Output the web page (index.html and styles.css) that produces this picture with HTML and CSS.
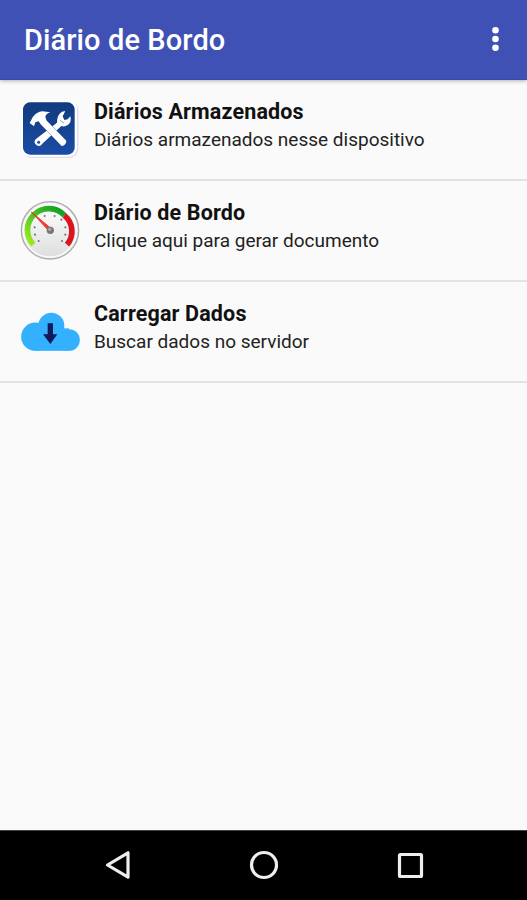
FILE: index.html
```html
<!DOCTYPE html>
<html lang="pt-BR">
    <head>
        <meta charset="utf-8">
        <title>Diário de Bordo</title>
        <link rel="stylesheet" href="styles.css">
    </head>
    <body>
        <header class="toolbar">
            <h1>Diário de Bordo</h1>
            <button class="overflow" aria-label="Mais opções">
                <svg width="9" height="26" viewBox="0 0 9 26" fill="#fff">
                    <circle cx="4.5" cy="4.2" r="3.3"/>
                    <circle cx="4.5" cy="13" r="3.3"/>
                    <circle cx="4.5" cy="21.8" r="3.3"/>
                </svg>
            </button>
        </header>
        <main class="list">
            <div class="item">
                <svg class="icon" viewBox="30 30 180 180">
                    <defs>
                        <linearGradient id="blue" x1="0" y1="0" x2="0" y2="1">
                            <stop offset="0" stop-color="#113a80"/>
                            <stop offset="1" stop-color="#1b4da5"/>
                        </linearGradient>
                    </defs>
                    <rect x="36" y="34" width="169" height="170" rx="27" fill="#dfdfec"/>
                    <rect x="34" y="32" width="167" height="168" rx="25" fill="#fff"/>
                    <rect x="39" y="37" width="155" height="157" rx="21" fill="url(#blue)"/>
                    <!-- wrench -->
                    <path d="M77 148L141 98Q141 73 156 65L166 63L158 79L163 90L173 88L181 79Q186 97 172 106Q164 111 154 108L97 161Q89 173 79 165Q69 157 77 148Z" fill="#fff"/>
                    <circle cx="86" cy="157" r="4.5" fill="#1b4da5"/>
                    <path d="M150 91L162 99" stroke="#8da5cd" stroke-width="3"/>
                    <!-- hammer -->
                    <path d="M59 99L68 82Q80 65 97 64L121 67Q108 71 106 80L109 91L169 152Q169 165 155 168L92 103L86 94L76 97L72 109Z" fill="#fff" stroke="#1b4589" stroke-width="2" paint-order="stroke"/>
                </svg>
                <div class="text">
                    <h2>Diários Armazenados</h2>
                    <p>Diários armazenados nesse dispositivo</p>
                </div>
            </div>
            <div class="item">
                <svg class="icon" viewBox="30 33 180 180">
                    <defs>
                        <linearGradient id="face" x1="0" y1="0" x2="0" y2="1">
                            <stop offset="0" stop-color="#fff"/>
                            <stop offset="1" stop-color="#dedede"/>
                        </linearGradient>
                        <linearGradient id="green" x1="0" y1="1" x2="1" y2="0">
                            <stop offset="0" stop-color="#a5ed1c"/>
                            <stop offset=".5" stop-color="#49c626"/>
                            <stop offset="1" stop-color="#0c9a20"/>
                        </linearGradient>
                    </defs>
                    <circle cx="120" cy="121" r="86" fill="#e9e9e9" stroke="#aaa" stroke-width="4"/>
                    <circle cx="120" cy="121" r="80" fill="url(#face)" stroke="#fafafa" stroke-width="4"/>
                    <path d="M70 164A62 62 0 0 1 163 76" fill="none" stroke="url(#green)" stroke-width="17"/>
                    <path d="M163 76A62 62 0 0 1 171 164" fill="none" stroke="#d9151d" stroke-width="17"/>
                    <g fill="#777">
                        <circle cx="86" cy="153" r="3.2"/>
                        <circle cx="75" cy="134" r="3.2"/>
                        <circle cx="74" cy="112" r="3.2"/>
                        <circle cx="104" cy="78" r="3.2"/>
                        <circle cx="134" cy="78" r="3.2"/>
                        <circle cx="154" cy="89" r="3.2"/>
                        <circle cx="166" cy="112" r="3.2"/>
                        <circle cx="166" cy="134" r="3.2"/>
                        <circle cx="156" cy="153" r="3.2"/>
                    </g>
                    <path d="M64 66L124 116L118 124Z" fill="#ed3b2f" stroke="#ed3b2f" stroke-width="3"/>
                    <circle cx="121" cy="121" r="11" fill="#777"/>
                    <circle cx="119" cy="118" r="5" fill="#aaa"/>
                </svg>
                <div class="text">
                    <h2>Diário de Bordo</h2>
                    <p>Clique aqui para gerar documento</p>
                </div>
            </div>
            <div class="item">
                <svg class="icon" viewBox="30 21 180 180">
                    <g fill="#33b1ff">
                        <circle cx="76" cy="125" r="42.5"/>
                        <circle cx="124" cy="92" r="39"/>
                        <circle cx="177" cy="135" r="32.5"/>
                        <rect x="76" y="100" width="101" height="67.5"/>
                    </g>
                    <path d="M113 85H129V118H142L121 147L99 118H113Z" fill="#10195a"/>
                </svg>
                <div class="text">
                    <h2>Carregar Dados</h2>
                    <p>Buscar dados no servidor</p>
                </div>
            </div>
        </main>
        <nav class="navbar">
            <svg width="30" height="30" viewBox="0 0 30 30">
                <path d="M4.5 15L25 2.8V27.2Z"/>
            </svg>
            <svg width="30" height="30" viewBox="0 0 30 30">
                <circle cx="15" cy="15" r="12.5"/>
            </svg>
            <svg width="30" height="30" viewBox="0 0 30 30">
                <rect x="4.5" y="4.5" width="22" height="22" rx="1"/>
            </svg>
        </nav>
    </body>
</html>
```

FILE: styles.css
```css
* {
    box-sizing: border-box;
}
body {
    margin: 0;
    height: 100vh;
    display: flex;
    flex-direction: column;
    background: #fafafa;
    font-family: Roboto, "Liberation Sans", sans-serif;
    color: #111;
}
h1, h2, p {
    margin: 0;
    white-space: nowrap;
}
.toolbar {
    height: 80px;
    flex: none;
    display: flex;
    align-items: center;
    justify-content: space-between;
    padding: 0 27px 1px 24px;
    background: #3f51b5;
    border-bottom: 1px solid #3849a6;
    box-shadow: 0 1px 4px rgba(0, 0, 0, 0.3);
    color: #fff;
}
.toolbar h1 {
    font-size: 29px;
    font-weight: 500;
    line-height: 36px;
    padding-top: 2px;
    letter-spacing: 0.1px;
}
.overflow {
    display: flex;
    padding: 0;
    border: 0;
    background: none;
}
.list {
    flex: 1;
}
.item {
    display: flex;
    gap: 14px;
    height: 101px;
    padding: 20px 20px 0;
    border-bottom: 2px solid #e3e3e3;
}
.icon {
    width: 60px;
    height: 60px;
    flex: none;
}
.text h2 {
    font-size: 21.5px;
    font-weight: 700;
    line-height: 24px;
    letter-spacing: 0.15px;
}
.text p {
    font-size: 19px;
    line-height: 32px;
    color: #222;
}
.navbar {
    height: 70px;
    flex: none;
    display: flex;
    justify-content: center;
    align-items: center;
    gap: 116px;
    padding-bottom: 1px;
    background: #000;
    border-top: 1px solid #444;
}
.navbar svg {
    fill: none;
    stroke: #eee;
    stroke-width: 3.2;
    stroke-linejoin: round;
}
```
